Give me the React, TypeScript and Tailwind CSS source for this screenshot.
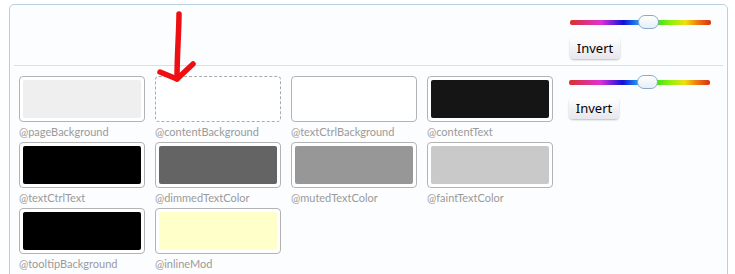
import React from "react";

type Sw = { name: string; color: string; dashed?: boolean };

const swatches: Sw[] = [
  { name: "@pageBackground", color: "#efefef" },
  { name: "@contentBackground", color: "transparent", dashed: true },
  { name: "@textCtrlBackground", color: "#ffffff" },
  { name: "@contentText", color: "#151515" },
  { name: "@textCtrlText", color: "#000000" },
  { name: "@dimmedTextColor", color: "#646464" },
  { name: "@mutedTextColor", color: "#979797" },
  { name: "@faintTextColor", color: "#c9c9c9" },
  { name: "@tooltipBackground", color: "#000000" },
  { name: "@inlineMod", color: "#ffffc9" },
];

function Controls() {
  return (
    <div className="flex flex-col w-[141px]">
      <div className="relative h-[16px] flex items-center">
        <div className="h-[5px] w-full rounded-[2px] bg-[linear-gradient(to_right,#d8322a_0%,#e030d8_22%,#1010d8_38%,#2090f0_48%,#60b8f0_55%,#40e020_62%,#90f010_72%,#f0e010_82%,#f08010_90%,#d83010_100%)]" />
        <div className="absolute left-[68px] top-[1px] w-[21px] h-[14px] rounded-[7px] border border-[#86abcc] bg-[linear-gradient(to_bottom,#ffffff,#e6eef5)]" />
      </div>
      <button className="mt-[8px] w-[50px] h-[21px] rounded-[4px] bg-[linear-gradient(to_bottom,#ffffff,#e6e6ec)] shadow-[0_1px_2px_rgba(0,0,0,0.25)] text-[13px] text-black leading-none font-['Noto_Sans',sans-serif]">
        Invert
      </button>
    </div>
  );
}

function Swatch({ s }: { s: Sw }) {
  return (
    <div className="flex flex-col">
      <div
        className={
          s.dashed
            ? "h-[46px] rounded-[4px] border border-dashed border-[#aaaaaa] bg-white"
            : "h-[46px] rounded-[4px] border border-[#b3b3b3] bg-white p-[3px]"
        }
      >
        {!s.dashed && (
          <div className="h-full w-full rounded-[2px]" style={{ backgroundColor: s.color }} />
        )}
      </div>
      <div className="h-[20px] pt-[2px] text-[11px] leading-[16px] text-[#9a9a9a] font-['Lato',sans-serif]">
        {s.name}
      </div>
    </div>
  );
}

export default function App() {
  return (
    <div className="relative w-[735px] h-[274px] bg-white overflow-hidden">
      <div className="ml-[9px] mt-[4px] w-[719px] h-[300px] border border-[#b7d2de] rounded-[5px] bg-[#fcfdff]">
        <div className="flex justify-end pr-[16px] pt-[9px] h-[60px]">
          <Controls />
        </div>
        <div className="mx-[4px] h-px bg-[#d0e3ea]" />
        <div className="flex pl-[9px] pt-[10px]">
          <div className="grid grid-cols-[repeat(4,126px)] gap-x-[10px] w-[534px]">
            {swatches.map((s) => (
              <Swatch key={s.name} s={s} />
            ))}
          </div>
          <div className="ml-[16px] -mt-[2px]">
            <Controls />
          </div>
        </div>
      </div>
      <svg className="absolute left-0 top-0 pointer-events-none" width="735" height="274">
        <path d="M179 14 C179 30 177 55 177 79" stroke="#ee0f12" strokeWidth="5.5" fill="none" strokeLinecap="round" />
        <path d="M160 72 L177 79 L193 64" stroke="#ee0f12" strokeWidth="5.5" fill="none" strokeLinecap="round" strokeLinejoin="round" />
      </svg>
    </div>
  );
}
